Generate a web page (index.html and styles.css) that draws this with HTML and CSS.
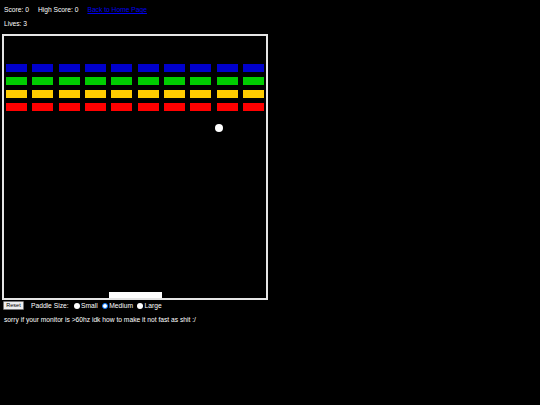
FILE: index.html
```html
<!DOCTYPE html>
<html>
<head>
<meta charset="utf-8">
<link rel="stylesheet" href="styles.css">
</head>
<body>
<div class="stats">
  <span class="stat">Score: 0</span>
  <span class="stat">High Score: 0</span>
  <a class="home" href="#">Back to Home Page</a>
</div>
<div class="lives">Lives: 3</div>
<div class="board">
  <div class="bricks">
    <span class="brick blue"></span><span class="brick blue"></span><span class="brick blue"></span><span class="brick blue"></span><span class="brick blue"></span><span class="brick blue"></span><span class="brick blue"></span><span class="brick blue"></span><span class="brick blue"></span><span class="brick blue"></span>
    <span class="brick green"></span><span class="brick green"></span><span class="brick green"></span><span class="brick green"></span><span class="brick green"></span><span class="brick green"></span><span class="brick green"></span><span class="brick green"></span><span class="brick green"></span><span class="brick green"></span>
    <span class="brick yellow"></span><span class="brick yellow"></span><span class="brick yellow"></span><span class="brick yellow"></span><span class="brick yellow"></span><span class="brick yellow"></span><span class="brick yellow"></span><span class="brick yellow"></span><span class="brick yellow"></span><span class="brick yellow"></span>
    <span class="brick red"></span><span class="brick red"></span><span class="brick red"></span><span class="brick red"></span><span class="brick red"></span><span class="brick red"></span><span class="brick red"></span><span class="brick red"></span><span class="brick red"></span><span class="brick red"></span>
  </div>
  <span class="ball"></span>
  <span class="paddle"></span>
</div>
<div class="controls">
  <button class="reset">Reset</button>
  <span class="label">Paddle Size:</span>
  <label class="opt"><span class="radio"></span>Small</label>
  <label class="opt"><span class="radio checked"></span>Medium</label>
  <label class="opt"><span class="radio"></span>Large</label>
</div>
<p class="note">sorry if your monitor is &gt;60hz idk how to make it not fast as shit :/</p>
</body>
</html>
```
FILE: styles.css
```css
html, body {
  margin: 0;
  background: #000;
}
body {
  padding: 0 0 0 4px;
  color: #fff;
  font-family: "Liberation Sans", Arial, sans-serif;
  font-size: 6.7px;
}
.stats {
  height: 14px;
  padding-top: 3px;
  display: flex;
  align-items: center;
  gap: 9px;
  line-height: 14px;
}
.home {
  color: #0000ee;
  text-decoration: underline;
}
.lives {
  height: 14px;
  line-height: 14px;
}
.board {
  position: relative;
  margin-left: -2px;
  margin-top: 3px;
  width: 262px;
  height: 262px;
  border: 2px solid #e6e6e6;
  box-sizing: content-box;
}
.bricks {
  display: grid;
  grid-template-columns: repeat(10, 21px);
  grid-auto-rows: 8px;
  column-gap: 5.33px;
  row-gap: 5px;
  padding: 28px 0 0 2px;
}
.brick { display: block; }
.blue { background: #0000cc; }
.green { background: #00cc00; }
.yellow { background: #ffcc00; }
.red { background: #ff0000; }
.ball {
  position: absolute;
  left: 211px;
  top: 88px;
  width: 8px;
  height: 8px;
  border-radius: 50%;
  background: #fff;
}
.paddle {
  position: absolute;
  left: 105px;
  bottom: 0;
  width: 53px;
  height: 6px;
  background: #fff;
}
.controls {
  display: flex;
  align-items: center;
  height: 11px;
  margin-left: -1px;
}
.reset {
  font-family: "Liberation Sans", Arial, sans-serif;
  font-size: 5.5px;
  height: 9px;
  width: 21px;
  padding: 0;
  margin: 0 7px 0 0;
  background: #efefef;
  color: #000;
  border: 1px solid #767676;
  border-radius: 1px;
  line-height: 7px;
}
.label { margin-right: 5px; }
.opt {
  display: flex;
  align-items: center;
  margin-right: 4px;
}
.radio {
  display: inline-block;
  width: 6px;
  height: 6px;
  border-radius: 50%;
  background: #fff;
  box-sizing: border-box;
  margin-right: 1.5px;
}
.radio.checked {
  background: #fff;
  border: 1.5px solid #0075ff;
}
.note {
  margin: 0;
  padding-top: 4px;
  line-height: 10px;
}
```
